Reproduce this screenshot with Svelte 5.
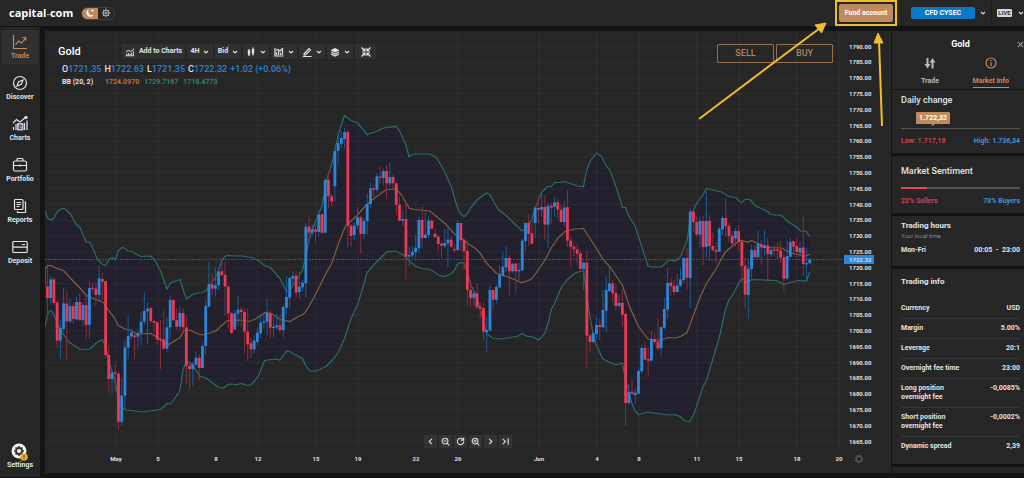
<script lang="ts">
	// each bar is [high, open, close, low], in thirds of a pixel below the base of its segment
	const segments = [
		{
			base: 170,
			bars: [
				[290, 293, 349, 352], [283, 349, 384, 437], [318, 384, 328, 400], [322, 328, 399, 404],
				[392, 397, 512, 533], [450, 512, 474, 567], [353, 477, 400, 487], [362, 401, 454, 570],
				[388, 454, 408, 460], [398, 408, 447, 460], [380, 448, 396, 452], [370, 396, 450, 452],
				[400, 450, 405, 470], [376, 405, 465, 507], [332, 465, 354, 507], [338, 353, 356, 366],
				[342, 356, 375, 408], [286, 375, 325, 395], [308, 327, 335, 390], [333, 333, 555, 565],
				[525, 555, 627, 668], [600, 627, 608, 674], [583, 607, 611, 664], [604, 611, 755, 778],
				[627, 755, 677, 767], [510, 677, 532, 718], [438, 533, 498, 567], [478, 499, 487, 508],
				[486, 496, 501, 569], [480, 500, 489, 535], [425, 489, 455, 525], [366, 455, 423, 464],
				[397, 424, 416, 522], [410, 414, 453, 459], [451, 453, 458, 487], [455, 457, 508, 523],
				[450, 506, 509, 597], [423, 508, 536, 538], [441, 536, 472, 548], [375, 472, 390, 506],
				[388, 390, 450, 455], [415, 450, 470, 480], [410, 470, 429, 482], [414, 429, 472, 493],
				[440, 472, 588, 642], [574, 588, 597, 657], [576, 597, 583, 645], [545, 584, 563, 588],
				[554, 563, 594, 632], [519, 594, 528, 596], [392, 528, 408, 554], [276, 410, 343, 412],
				[310, 343, 356, 374], [292, 356, 346, 380], [294, 346, 304, 361], [268, 304, 315, 320],
				[276, 314, 350, 437], [345, 350, 430, 476], [425, 430, 489, 490], [420, 478, 430, 480],
				[378, 431, 419, 466], [412, 419, 426, 470], [414, 426, 485, 550], [415, 485, 523, 573]
			]
		},
		{
			base: 100,
			bars: [
				[715, 730, 748, 775], [705, 748, 722, 760], [682, 725, 698, 735], [648, 700, 668, 715],
				[645, 668, 664, 684], [597, 665, 639, 705], [631, 640, 683, 716], [650, 683, 680, 711],
				[640, 682, 676, 690], [644, 676, 690, 699], [615, 690, 621, 711], [530, 623, 591, 643],
				[530, 593, 534, 626], [513, 536, 528, 548], [515, 527, 578, 592], [516, 576, 560, 595],
				[540, 562, 548, 573], [369, 549, 380, 592], [353, 380, 398, 428], [374, 398, 388, 405],
				[372, 388, 395, 428], [330, 396, 343, 410], [340, 343, 398, 400], [236, 398, 240, 400],
				[216, 240, 289, 325], [279, 289, 305, 320], [146, 258, 153, 306], [95, 153, 129, 195],
				[93, 131, 114, 145], [84, 117, 96, 146], [88, 96, 377, 443], [372, 377, 408, 440],
				[368, 405, 377, 420], [322, 376, 352, 388], [346, 352, 402, 460], [352, 402, 363, 418],
				[280, 363, 312, 405], [248, 312, 265, 325], [253, 265, 269, 290], [220, 269, 229, 278],
				[199, 230, 234, 251], [205, 234, 213, 256], [195, 213, 250, 296], [190, 250, 231, 260],
				[220, 231, 250, 265], [246, 250, 314, 345], [289, 314, 362, 364], [329, 362, 357, 378],
				[305, 357, 470, 537], [440, 470, 465, 498], [438, 466, 455, 475], [405, 457, 443, 474],
				[350, 445, 360, 460], [321, 360, 414, 445], [336, 414, 404, 416], [350, 405, 362, 414],
				[357, 362, 386, 388], [386, 401, 411, 414], [405, 410, 432, 455]
			]
		},
		{
			base: 140,
			bars: [
				[305, 311, 317, 354], [267, 318, 309, 324], [262, 310, 299, 382], [287, 299, 320, 324],
				[314, 327, 330, 338], [241, 330, 249, 333], [248, 249, 301, 333], [294, 300, 334, 388],
				[302, 333, 449, 497], [432, 450, 474, 501], [449, 474, 460, 500], [430, 460, 502, 508],
				[486, 500, 506, 536], [487, 504, 575, 603], [533, 577, 570, 638], [434, 572, 450, 574],
				[448, 450, 479, 507], [434, 479, 441, 491], [376, 442, 404, 446], [336, 406, 380, 414],
				[318, 382, 354, 396], [346, 354, 394, 468], [369, 394, 371, 398], [368, 371, 394, 459],
				[368, 393, 390, 420], [298, 391, 302, 393], [246, 303, 249, 333], [225, 249, 282, 318],
				[240, 280, 311, 313], [197, 249, 203, 294], [173, 204, 209, 252], [158, 209, 201, 230],
				[165, 201, 254, 299], [188, 254, 197, 324], [189, 197, 203, 250], [171, 200, 187, 230],
				[178, 187, 209, 234], [195, 209, 246, 247], [183, 246, 203, 260], [150, 202, 302, 320],
				[290, 302, 320, 380], [304, 320, 328, 350], [310, 328, 341, 376], [330, 340, 387, 391],
				[365, 387, 368, 452], [332, 368, 587, 684], [582, 586, 606, 636], [577, 606, 580, 612],
				[530, 582, 555, 600], [535, 555, 561, 600], [449, 562, 510, 566], [409, 512, 450, 576],
				[378, 453, 430, 456], [420, 430, 460, 487], [432, 459, 498, 512], [464, 498, 489, 503],
				[448, 489, 524, 560], [518, 522, 789, 858]
			]
		},
		{
			base: 170,
			bars: [
				[643, 699, 666, 704], [627, 665, 671, 676], [655, 675, 668, 702], [595, 671, 603, 672],
				[525, 604, 534, 610], [515, 534, 569, 570], [531, 567, 572, 620], [483, 572, 507, 573],
				[488, 507, 516, 524], [444, 515, 535, 543], [470, 535, 471, 561], [384, 473, 417, 478],
				[293, 419, 339, 446], [322, 338, 349, 376], [331, 348, 366, 375], [313, 366, 346, 368],
				[295, 347, 328, 350], [262, 330, 264, 339], [231, 264, 323, 362], [115, 324, 125, 415],
				[118, 124, 156, 185], [139, 156, 194, 202], [139, 194, 153, 235], [137, 153, 231, 285],
				[65, 231, 153, 262], [135, 153, 228, 272], [188, 228, 240, 245], [216, 240, 245, 280],
				[171, 245, 176, 247], [136, 178, 144, 195], [83, 144, 168, 200], [159, 167, 198, 216],
				[183, 197, 220, 230], [174, 205, 183, 230], [166, 183, 216, 243], [214, 215, 288, 340],
				[262, 287, 374, 415], [268, 375, 296, 448], [223, 297, 240, 323], [225, 241, 262, 262],
				[181, 262, 220, 264], [209, 222, 232, 284], [180, 234, 226, 258], [205, 226, 252, 334],
				[230, 254, 240, 262], [226, 238, 241, 258], [217, 238, 242, 269], [213, 241, 263, 280],
				[248, 262, 326, 367], [212, 326, 258, 329], [203, 260, 216, 265], [212, 214, 230, 248],
				[204, 228, 246, 263], [216, 248, 234, 260], [135, 232, 282, 317], [234, 283, 279, 331],
				[264, 280, 269, 280]
			]
		}
	];

	const candles = segments
		.flatMap((s) => s.bars.map((bar) => bar.map((v) => s.base + v / 3)))
		.map(([high, open, close, low], i) => ({
			x: 44.2 + i * 3.23,
			high,
			low,
			top: Math.min(open, close),
			height: Math.max(1.4, Math.abs(open - close)),
			up: close < open
		}));

	// Bollinger bands
	const upper =
		'45,210.7 47.3,218 50.7,220 54,218 57.5,211.5 61.5,208.5 65,209 70,213.5 76,224 80,227.5 86,242 89.5,242 93.5,250 97.5,259.5 102.5,264.5 105.5,265.5 109,259.5 112,257.5 115.5,259.5 118.5,250.5 122,247.5 125,248.5 128,251 131.5,251.5 141,256.5 151,256 155,260.5 160.5,271 167,289 170.5,283 180,279.5 182.5,288 186.5,299 192.5,294.5 198,293 202.5,292.5 206.5,290 210,285 215.5,277.5 218.5,270.5 222,260 225.5,256 228.5,255.5 235,256 241.5,256 247.5,257 251.5,257.5 258.5,260.5 264.5,265.5 270.5,267.5 280,278.5 286.5,291.5 289.5,291 295,281.5 302.5,270.5 306,256 309,240 315.5,221.5 322,206 326.5,180 331.5,165 338.5,134 344.5,115.5 351,120.5 357.5,123 367,134.5 376.5,131.5 383.5,128 396,126.5 399.5,131 406,145 409,157 413.5,154 430,154 436,157.5 438,160 444.5,171.5 451.5,187.5 457.5,208 461,214.5 464,216.5 467.5,213.5 470.5,208 477.5,199.5 486.5,193 490,195 493.5,201.5 498.5,209.5 506,215.5 522,231 525.5,228.5 532,219.5 535,208.5 541.5,192.5 547.5,186.5 551.5,186.5 554.5,182.5 561,182.5 564.5,181.5 570.5,183.5 577,186 583.5,186.5 586.5,171 590,161.5 596.5,153 601.5,156.5 606,165.5 609.5,169.5 615.5,185 622.5,207.5 625.5,207.5 628.5,215.5 635,226 641.5,246 648,266 651.5,267 661.5,267 668.5,260.5 671.5,260 674.5,261.5 680.5,257 683.5,249 687,241.5 690.5,216.5 696.5,203.5 702.5,196 706.5,188.5 711,189.5 721.5,192 728.5,196.5 735.5,197.5 741.5,203 745,199.5 750,199.5 755,205.5 761,208.5 767.5,211.5 770.5,214.5 781.5,215.5 788.5,222 796.5,227 800.5,231 806.5,231.5 809.5,236.5';
	const middle =
		'45,268.5 48.5,265.5 51.5,265.5 56.5,268.5 63.5,270.5 73.5,281.5 80,288 86.5,295.5 93.5,298.5 98.5,300.5 103.5,302.5 108.5,310.5 113.5,316.5 118.5,325.5 125,329 131.5,330.5 136.5,334 151.5,333.5 158.5,338.5 167.5,345.5 173.5,341.5 179.5,338 184,330.5 190,330 198.5,334 202.5,335 210,333 216.5,330.5 221.5,325.5 227.5,320.5 240,320 249.5,321.5 256.5,318.5 265,312.5 271.5,313.5 280,319.5 290,321.5 296.5,317.5 303.5,314 306.5,310.5 313.5,298.5 319.5,286.5 326.5,272.5 332,262.5 338.5,243.5 345.5,226 357.5,215 366.5,204.5 376.5,196.5 386.5,189.5 396,189 401.5,195 409.5,208.5 415,209.5 430,211 434,214.5 439.5,219 445,223.5 454.5,234 461.5,238.5 468.5,244 475,248 480.5,253.5 485.5,262 496.5,273.5 508.5,277 521.5,282.5 528.5,280.5 532.5,278 538.5,269.5 545,260 551.5,247.5 558.5,237.5 565,231.5 575,229 583.5,228.5 590,238.5 596.5,248.5 603.5,260 610,267 616.5,276.5 622.5,285.5 629.5,306.5 638.5,326.5 648,339 660,340.5 668.5,337.5 675,338 680.5,336.5 687,332.5 693.5,315 700,297.5 706.5,283.5 716,269 721.5,258.5 725.5,252 733.5,245 740,240.5 748.5,242 751.5,240.5 758.5,244 766.5,247.5 781.5,248 790,252.5 801.5,255.5 806.5,256 809.5,254';
	const lower =
		'45,326.5 48,312.5 51,310.5 54,314.5 57.5,324 61.5,331.5 68.5,341.5 73.5,345 80,349.5 90,349 96,343 102.5,339.5 105.5,346.5 109,361.5 112,371.5 115.5,383.5 118.5,400 121.5,407.5 126.5,410 143,412 160.5,409.5 167,403.5 170.5,404 173.5,400 176.5,396 180,390 183,370 186.5,361 189.5,362.5 193.5,366.5 199.5,376 206.5,378 210,381 218.5,387.5 223.5,388 228.5,384 236.5,384.5 241.5,383.5 247.5,385.5 251.5,384.5 258.5,376 264.5,360.5 275,359 280,360 286.5,351 290,351.5 295,354.5 302.5,358.5 306,366 310,371 315.5,371 321,369 326.5,366 331.5,361 338.5,352 344.5,338.5 351,318.5 357.5,305 364,283.5 367,272.5 376.5,262 386.5,252 395,251 403.5,255 408.5,260 415,266 421.5,268.5 430,269.5 439.5,275.5 444.5,276.5 451,273.5 454.5,270.5 457.5,264 461,262.5 464,263.5 467.5,273 470.5,283.5 477,298.5 483.5,320 486.5,333.5 492.5,338 500,339 510,337.5 518.5,336 522,333.5 527.5,336.5 532,336.5 538.5,340 541.5,337.5 545,332.5 548.5,321.5 551.5,309 554.5,303.5 561,288 567.5,279.5 575,273 583.5,270.5 586.5,293 590,316.5 593.5,336.5 596.5,345 602.5,358.5 609.5,362.5 615.5,364.5 622.5,363.5 625.5,380 628.5,390 632,403.5 635,411 638.5,414.5 648,412 658.5,413.5 668.5,415 674,414.5 680.5,416.5 685,421 689.5,421.5 693.5,415 696.5,406.5 703,386.5 706.5,380.5 710,368.5 716,348.5 719.5,336.5 725,311.5 728.5,300.5 732,296 738.5,283.5 741.5,278.5 745,280 747.5,282.5 751.5,279.5 776.5,280.5 783.5,284.5 790,282.5 798.5,280.5 806.5,281 809.5,272';
	const band = upper + ' ' + lower.split(' ').reverse().join(' ');

	const prices = Array.from({ length: 26 }, (_, i) => ({
		label: (1790 - i * 5).toFixed(2),
		y: 46.5 + i * 15.8
	}));

	const dates = [
		{ x: 116, label: 'May' },
		{ x: 158, label: '5' },
		{ x: 216, label: '8' },
		{ x: 258, label: '12' },
		{ x: 316, label: '15' },
		{ x: 358, label: '19' },
		{ x: 416, label: '22' },
		{ x: 458, label: '26' },
		{ x: 539, label: 'Jun' },
		{ x: 597, label: '4' },
		{ x: 639, label: '8' },
		{ x: 697, label: '11' },
		{ x: 739, label: '15' },
		{ x: 797, label: '18' },
		{ x: 839, label: '20' }
	];

	const nav = ['Trade', 'Discover', 'Charts', 'Portfolio', 'Reports', 'Deposit'];
	const tools = ['candles', 'indicators', 'draw', 'layers'];
	const navButtons = ['Back', 'Zoom out', 'Reset', 'Zoom in', 'Forward', 'Latest'];

	const info = [
		['Currency', 'USD'],
		['Margin', '5.00%'],
		['Leverage', '20:1'],
		['Overnight fee time', '23:00'],
		['Long position overnight fee', '-0,0085%'],
		['Short position overnight fee', '-0,0002%'],
		['Dynamic spread', '2,39']
	];
</script>

{#snippet chevron()}
	<svg class="chevron" viewBox="0 0 6 6"><path d="M1 2l2 2 2-2" /></svg>
{/snippet}

{#snippet gear()}
	<circle cx="8" cy="8" r="4.6" />
	<circle cx="8" cy="8" r="1.8" />
	<path d="M8 1v2.4M8 12.6V15M1 8h2.4M12.6 8H15M3 3l1.8 1.8M11.2 11.2L13 13M3 13l1.8-1.8M11.2 4.8L13 3" />
{/snippet}

<div class="app">
	<header>
		<a class="logo" href="#home">capital<span>-</span>com</a>
		<div class="theme">
			<button class="dark" aria-label="Dark theme">
				<svg viewBox="0 0 12 12">
					<path d="M5 1.6a4.6 4.6 0 1 0 5.6 6.2A4.2 4.2 0 0 1 5 1.6z" fill="#fff" />
					<path d="M9 .8l.6 1.6 1.6.6-1.6.6L9 5.2l-.6-1.600L6.800 3l1.600-.6z" fill="#fff" />
				</svg>
			</button>
			<button aria-label="Settings">
				<svg class="line" viewBox="0 0 16 16">{@render gear()}</svg>
			</button>
		</div>
		<div class="spacer"></div>
		<div class="highlight"><button class="fund">Fund account</button></div>
		<div class="account">
			<button class="cfd">CFD CYSEC</button>
			{@render chevron()}
		</div>
		<div class="mode">
			<span class="live">LIVE</span>
			{@render chevron()}
		</div>
	</header>

	<div class="body">
		<nav>
			{#each nav as name}
				<a href="#{name}" class:active={name === 'Trade'}>
					<svg class="line" viewBox="0 0 16 16">
						{#if name === 'Trade'}
							<path d="M1.5 1v13.5H15M3.5 11l3-4 3 2 4-5M10.5 3.5h3.2v3.2" />
						{:else if name === 'Discover'}
							<circle cx="8" cy="8" r="6.5" />
							<path d="M11 5L9.3 9.3 5 11l1.7-4.3z" />
						{:else if name === 'Charts'}
							<path d="M1 7l3.5-3.5L8 6l5.5-4.5M1.5 14V11M4 14V8M6.5 14V9M12.5 14V7M15 14V4.5" />
							<circle cx="14" cy="1.5" r="1" fill="currentColor" />
							<rect x="5" y="7" width="6.5" height="7.5" fill="#b9bfd6" stroke="none" />
							<path d="M7 9h2.300v1.700H7.200v1.700h2.400" stroke="#30344a" stroke-width=".9" />
						{:else if name === 'Portfolio'}
							<rect x="1.5" y="4" width="13" height="10" rx="1.5" />
							<path d="M5 4V2.5Q5 1.5 6 1.5h4q1 0 1 1V4M1.5 8.5h13M8 7.5v2" />
						{:else if name === 'Reports'}
							<rect x="2.5" y="1.5" width="8.5" height="10" rx="1" />
							<path d="M12.5 4h1v10.5H5.5V13M4.5 4.5h4.5M4.5 6.5h4.5M4.5 8.5h3" />
						{:else}
							<rect x=".8" y="2.5" width="14.4" height="11" rx="1" />
							<path d="M1 8.2h14M10 5.5h3" />
						{/if}
					</svg>
					{name}
				</a>
			{/each}
			<a href="#settings" class="settings">
				<svg viewBox="0 0 18 18">
					<circle cx="8" cy="8" r="7.5" fill="#f2f2f2" />
					<circle cx="8" cy="8" r="3" fill="none" stroke="#333" stroke-width="1.8" />
					<path d="M8 3v1.5M8 11.5V13M3 8h1.5M11.5 8H13M4.5 4.5l1 1M10.5 10.5l1 1M4.5 11.5l1-1M10.5 5.5l1-1" stroke="#333" stroke-width="1.5" />
					<circle cx="13" cy="14" r="3.8" fill="#e3ac3a" />
					<path d="M13 12v2.4M13 15.2v1" stroke="#5a3c00" />
				</svg>
				Settings
			</a>
		</nav>

		<main>
			<svg class="chart" viewBox="45 31 846 442">
				<polygon points={band} fill="#21202c" />
				<g class="grid">
					{#each prices as p}
						<line x1="45" x2="843" y1={p.y} y2={p.y} />
					{/each}
					{#each dates as d}
						<line x1={d.x} x2={d.x} y1="31" y2="450" />
					{/each}
				</g>
				<line class="last" x1="45" x2="845" y1="259.5" y2="259.5" />
				<g class="bands">
					<polyline points={upper} />
					<polyline points={lower} />
					<polyline class="mid" points={middle} />
				</g>
				{#each candles as c}
					<line class="wick" class:up={c.up} x1={c.x} x2={c.x} y1={c.high} y2={c.low} />
				{/each}
				{#each candles as c}
					<rect class="bar" class:up={c.up} x={c.x - 1.4} y={c.top} width="2.8" height={c.height} />
				{/each}
				<g class="axis">
					{#each prices as p}
						<text x="849" y={p.y + 2}>{p.label}</text>
					{/each}
					{#each dates as d}
						<text x={d.x} y="461" text-anchor="middle">{d.label}</text>
					{/each}
					<rect x="844" y="255" width="30" height="9" fill="#2f86d6" />
					<text x="849" y="262">1722.32</text>
				</g>
				<g class="axis-gear"><circle cx="859" cy="459" r="2.8" /><circle cx="859" cy="459" r="3.8" stroke-dasharray="1.5 1.5" /></g>
			</svg>

			<div class="top">
				<div class="toolbar">
					<h1>Gold</h1>
					<button class="add">
						<svg class="line" viewBox="0 0 12 10"><path d="M1 5l3-2 3 1.5L11 1M2 9V7M4 9V6M6 9V7M8 9V6M10 9V4M1 9.5h10" /></svg>
						Add to Charts
					</button>
					<button>4H {@render chevron()}</button>
					<button>Bid {@render chevron()}</button>
					{#each tools as tool}
						<button aria-label={tool}>
							<svg class="line" viewBox="0 0 10 10">
								{#if tool === 'candles'}
									<path d="M3 2v7M7 .5v8" />
									<rect x="1.8" y="3.5" width="2.4" height="4" fill="currentColor" stroke="none" />
									<rect x="5.8" y="2" width="2.4" height="4.5" fill="currentColor" stroke="none" />
								{:else if tool === 'indicators'}
									<path d="M1 1v8h8.5M2.5 8V5.5M4.5 8V4M6.5 8V5.5M8.5 8V2.5M2 3.5l2-1 2 1.5 3-3" />
								{:else if tool === 'draw'}
									<path d="M2 7l5-5.5 1.5 1.5-5 5H2zM1 9.5h8.5" />
								{:else}
									<path d="M5 1l4.5 2.2L5 5.4.5 3.2z" fill="currentColor" stroke="none" />
									<path d="M1 5l4 2 4-2M1 7l4 2 4-2" />
								{/if}
							</svg>
							{@render chevron()}
						</button>
					{/each}
					<button class="shrink" aria-label="Exit full screen">
						<svg class="line" viewBox="0 0 10 10"><path d="M.5.5L4 4M4 1.2V4H1.2M9.5.5L6 4M6 1.2V4h2.8M.5 9.5L4 6M4 8.8V6H1.2M9.5 9.5L6 6M6 8.8V6h2.8" /></svg>
					</button>
				</div>
				<div class="deal">
					<button>SELL</button>
					<button>BUY</button>
				</div>
			</div>
			<div class="legend">
				<p class="ohlc">
					<span>O<b>1721.35</b></span>
					<span>H<b>1722.63</b></span>
					<span>L<b>1721.35</b></span>
					<span>C<b>1722.32</b></span>
					<b>+1.02 (+0.06%)</b>
				</p>
				<p class="bb">
					<span class="name">BB (20, 2)</span>
					<span class="orange">1724.0970</span>
					<span class="teal">1729.7167</span>
					<span class="teal">1718.4773</span>
				</p>
			</div>
			<div class="pager">
				{#each navButtons as label}
					<button aria-label={label}>
						<svg class="line" viewBox="0 0 10 10">
							{#if label === 'Back'}
								<path d="M6.5 2l-3 3 3 3" />
							{:else if label === 'Forward'}
								<path d="M3.5 2l3 3-3 3" />
							{:else if label === 'Latest'}
								<path d="M2 2l3 3-3 3M8 1.5v7" />
							{:else if label === 'Reset'}
								<path d="M7.5 2.5A3.5 3.5 0 1 0 8.5 5M8.5.5v3h-3" />
							{:else}
								<circle cx="4.5" cy="4.5" r="3.2" />
								<path d="M7 7l2.2 2.2M3 4.5h3" />
								{#if label === 'Zoom in'}<path d="M4.5 3v3" />{/if}
							{/if}
						</svg>
					</button>
				{/each}
			</div>
		</main>

		<aside>
			<section class="tabs-block">
				<div class="title">
					<h2>Gold</h2>
					<button aria-label="Close"><svg class="line" viewBox="0 0 8 8"><path d="M1 1l6 6M7 1L1 7" /></svg></button>
				</div>
				<div class="tabs">
					<button>
						<svg viewBox="0 0 12 12"><path d="M2.5 1h2v6h2L3.500 11.500.500 7h2zM7.500 11.500V5.500h-2L8.500 1l3 4.500h-2v6z" fill="currentColor" /></svg>
						<span>Trade</span>
					</button>
					<button class="current">
						<svg class="line" viewBox="0 0 12 12"><circle cx="6" cy="6" r="5" /><path d="M6 5.3V9M6 3v1.2" /></svg>
						<span>Market Info</span>
					</button>
				</div>
			</section>
			<section class="daily">
				<h3>Daily change</h3>
				<div class="range"><span>1.722,32</span></div>
				<div class="pair"><span class="red">Low: 1.717,18</span><span class="blue">High: 1.736,34</span></div>
			</section>
			<section class="sentiment">
				<h3>Market Sentiment</h3>
				<div class="meter"><div style:width="22%"></div></div>
				<div class="pair"><span class="red">22% Sellers</span><span class="blue">78% Buyers</span></div>
			</section>
			<section class="hours">
				<h4>Trading hours</h4>
				<small>Your local time</small>
				<div class="pair"><span>Mon-Fri</span><span>00:05 &nbsp;-&nbsp; 23:00</span></div>
			</section>
			<section class="info">
				<h4>Trading info</h4>
				<table>
					<tbody>
						{#each info as [name, value]}
							<tr><th scope="row"><span>{name}</span></th><td>{value}</td></tr>
						{/each}
					</tbody>
				</table>
			</section>
			<section class="rest"></section>
		</aside>
	</div>

	<svg class="arrows" viewBox="0 0 1024 478">
		<path d="M699 119L820 28M882 126L879 40" />
		<polygon points="826,23 821.5,33 815,25" />
		<polygon points="878,33 883,43 874,43" />
	</svg>
</div>

<style>
	:global(body) {
		background: #141414;
	}

	.app {
		position: relative;
		min-height: 100vh;
		display: flex;
		flex-direction: column;
		overflow: hidden;
		color: #e4e4e4;
		font-family: Roboto, 'Liberation Sans', sans-serif;
		font-size: 7px;
		font-weight: 700;
		line-height: 9px;
	}

	* {
		box-sizing: border-box;
	}

	button {
		display: flex;
		align-items: center;
		justify-content: center;
		padding: 0;
		border: 0;
		background: none;
		color: inherit;
		font: inherit;
		cursor: pointer;
		white-space: nowrap;
	}

	a {
		color: inherit;
		text-decoration: none;
	}

	h1, h2, h3, h4, p {
		margin: 0;
	}

	.line {
		fill: none;
		stroke: currentColor;
		stroke-width: 1.2;
	}

	.chevron {
		width: 6px;
		height: 6px;
		flex: none;
		fill: none;
		stroke: #ddd;
		stroke-width: 1.2;
	}

	header {
		display: flex;
		align-items: center;
		height: 26px;
		padding-left: 9px;
		background: #262626;
	}

	.logo {
		color: #fff;
		font: 700 11px/16px 'Open Sans', sans-serif;
	}

	.logo span {
		color: #c08a5e;
	}

	.theme {
		display: flex;
		height: 13px;
		margin-left: 8px;
		border: 1px solid #414141;
		border-radius: 7px;
		overflow: hidden;
	}

	.theme button {
		width: 16px;
	}

	.theme .dark {
		background: #c08a60;
	}

	.theme svg {
		width: 10px;
		height: 10px;
	}

	.spacer {
		flex: 1;
	}

	.highlight {
		padding: 2px;
		border: 2px solid #f0bd2c;
	}

	.fund {
		width: 54px;
		height: 18px;
		border-radius: 2px;
		background: #c08a60;
		color: #fff;
	}

	.account {
		display: flex;
		align-items: center;
		gap: 5px;
		height: 26px;
		margin-left: 4px;
		padding: 0 5px 0 9px;
		border-left: 1px solid #1c1c1c;
	}

	.cfd {
		width: 64px;
		height: 12px;
		border-radius: 2px;
		background: #0a79c8;
		color: #fff;
	}

	.mode {
		display: flex;
		align-items: center;
		gap: 6px;
		height: 26px;
		width: 33px;
		padding-left: 5px;
		border-left: 1px solid #1c1c1c;
	}

	.live {
		width: 17px;
		border-radius: 1px;
		background: #d8d8d8;
		color: #333;
		font-size: 6px;
		line-height: 8px;
		text-align: center;
	}

	.body {
		flex: 1;
		display: flex;
		padding-bottom: 1px;
	}

	nav {
		display: flex;
		flex-direction: column;
		gap: 7px;
		width: 40px;
		margin-top: 1px;
		padding: 3px 2px 6px;
		background: #262626;
	}

	nav a {
		display: flex;
		flex-direction: column;
		align-items: center;
		gap: 2px;
		height: 34px;
		padding-top: 4px;
		border-radius: 1px;
	}

	nav a.active {
		background: #303030;
		color: #c08a60;
	}

	nav svg {
		width: 16px;
		height: 16px;
	}

	nav .settings {
		gap: 0;
		margin-top: auto;
		height: 28px;
		padding: 0;
	}

	nav .settings svg {
		width: 18px;
		height: 18px;
	}

	main {
		position: relative;
		flex: 1;
		min-width: 0;
		margin: 5px 1px 4px 5px;
		background: #262626;
	}

	.chart {
		display: block;
		width: 100%;
	}

	.grid {
		stroke: #fff;
		stroke-opacity: 0.04;
	}

	.last {
		stroke: #28598a;
		stroke-dasharray: 2 1;
	}

	.bands {
		fill: none;
		stroke: #2c6e66;
		stroke-width: 1.2;
	}

	.bands .mid {
		stroke: #85603f;
	}

	.wick {
		stroke: #8c2c3e;
	}

	.wick.up {
		stroke: #1f5a94;
	}

	.bar {
		fill: #ea3a55;
	}

	.bar.up {
		fill: #2f86d6;
	}

	.axis text {
		fill: #e0e0e0;
		font-size: 6px;
	}

	.axis-gear {
		fill: none;
		stroke: #666;
	}

	.top {
		position: absolute;
		top: 13px;
		left: 13px;
		right: 58px;
		display: flex;
		align-items: flex-start;
		justify-content: space-between;
	}

	.toolbar {
		display: flex;
		gap: 2px;
	}

	.toolbar h1 {
		width: 62px;
		color: #fff;
		font-size: 11px;
		font-weight: 500;
		line-height: 15px;
	}

	.toolbar button {
		gap: 4px;
		width: 26px;
		height: 15px;
		background: #303030;
	}

	.toolbar .add {
		width: 63px;
	}

	.toolbar .shrink {
		width: 21px;
	}

	.toolbar .line {
		width: 10px;
		height: 10px;
	}

	.deal {
		display: flex;
		gap: 2px;
	}

	.deal button {
		width: 57px;
		height: 19px;
		border: 1px solid #96704f;
		border-radius: 1px;
		color: #b58259;
		font-size: 9px;
		font-weight: 500;
	}

	.legend {
		position: absolute;
		top: 32px;
		left: 17px;
	}

	.ohlc {
		display: flex;
		gap: 3px;
		font-size: 9px;
		font-weight: 500;
		line-height: 12px;
	}

	.ohlc b {
		color: #2f82cc;
		font-weight: 500;
	}

	.bb {
		display: flex;
		gap: 5px;
		margin-top: 3px;
	}

	.bb .name {
		width: 38px;
	}

	.orange {
		color: #b8763a;
	}

	.teal {
		color: #2f8471;
	}

	.pager {
		position: absolute;
		bottom: 25px;
		left: 50%;
		display: flex;
		gap: 2px;
		transform: translateX(-50%);
	}

	.pager button {
		width: 13px;
		height: 13px;
		background: #333;
	}

	.pager svg {
		width: 9px;
		height: 9px;
	}

	aside {
		display: flex;
		flex-direction: column;
		gap: 3px;
		width: 132px;
		margin: 5px 0 4px;
	}

	section {
		padding: 0 4px 0 9px;
		background: #262626;
	}

	.tabs-block {
		height: 58px;
		padding-right: 0;
	}

	.title {
		display: flex;
		padding-top: 7px;
	}

	.title h2 {
		flex: 1;
		padding-left: 3px;
		color: #fff;
		font-size: 9px;
		line-height: 12px;
		text-align: center;
	}

	.title svg {
		width: 7px;
		height: 7px;
		color: #999;
	}

	.tabs {
		display: flex;
		justify-content: space-between;
		padding: 7px 15px 0 20px;
	}

	.tabs button {
		flex-direction: column;
		gap: 8px;
		color: #b9b9c8;
	}

	.tabs svg {
		width: 12px;
		height: 12px;
	}

	.tabs span {
		padding-bottom: 1px;
		border-bottom: 1px solid transparent;
	}

	.tabs .current {
		color: #c08a60;
	}

	.tabs .current span {
		border-color: #c08a60;
	}

	h3 {
		font-size: 9px;
		font-weight: 500;
		line-height: 12px;
	}

	h4 {
		font-size: 8px;
		font-weight: 700;
		line-height: 10px;
	}

	.pair {
		display: flex;
		justify-content: space-between;
	}

	.red {
		color: #c94558;
	}

	.blue {
		color: #468fd0;
	}

	.daily {
		height: 63px;
		margin-top: -2px;
		padding-top: 4px;
	}

	.range {
		margin: 6px 0 8px;
		padding: 0 0 4px 15px;
		border-bottom: 1px solid #555;
	}

	.range span {
		position: relative;
		display: block;
		width: 34px;
		border-radius: 1px;
		background: #c08a60;
		color: #fff;
		line-height: 12px;
		text-align: center;
	}

	.range span::after {
		content: '';
		position: absolute;
		top: 12px;
		left: 15px;
		border: 2px solid transparent;
		border-top-color: #c08a60;
	}

	.sentiment {
		height: 57px;
		padding-top: 9px;
	}

	.meter {
		height: 2px;
		margin: 10px 0 8px;
		background: #555;
	}

	.meter div {
		height: 2px;
		background: #e04a5c;
	}

	.hours {
		height: 50px;
		padding-top: 5px;
	}

	.hours small {
		display: block;
		margin-bottom: 6px;
		color: #8a8a8a;
		font-size: 6px;
		font-weight: 400;
	}

	.info {
		height: 195px;
		padding-top: 8px;
	}

	table {
		width: 100%;
		margin-top: 12px;
		border-collapse: collapse;
	}

	th, td {
		padding: 5px 0;
		vertical-align: top;
		font-weight: 700;
	}

	th {
		text-align: left;
	}

	th span {
		display: block;
		max-width: 62px;
	}

	td {
		text-align: right;
	}

	tr + tr {
		border-top: 1px solid #353535;
	}

	.rest {
		flex: 1;
	}

	.arrows {
		position: absolute;
		top: 0;
		left: 0;
		width: 100%;
		fill: #f0bd2c;
		stroke: #f0bd2c;
		stroke-width: 2;
		pointer-events: none;
	}

	.arrows polygon {
		stroke-width: 1;
	}
</style>
